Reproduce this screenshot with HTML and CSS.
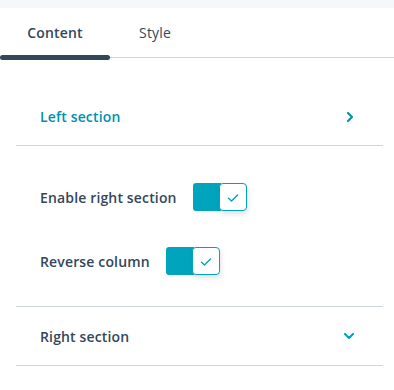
FILE: index.html
```html
<!DOCTYPE html>
<html lang="en">
<head>
  <meta charset="UTF-8">
  <title>Module settings</title>
  <link rel="stylesheet" href="styles.css">
</head>
<body>
  <div class="topbar"></div>

  <!-- tabs -->
  <div class="tabs">
    <div class="tab active">Content</div>
    <div class="tab">Style</div>
  </div>

  <div class="panel">
    <div class="section-head open">
      <span class="section-title">Left section</span>
      <svg class="chevron" width="12" height="12" viewBox="0 0 12 12">
        <path d="M4 2 L8 6 L4 10" fill="none" stroke="#0091ae" stroke-width="2.2" stroke-linecap="round" stroke-linejoin="round"/>
      </svg>
    </div>

    <div class="fields">
      <div class="field">
        <span class="field-label">Enable right section</span>
        <div class="toggle">
          <div class="toggle-track"></div>
          <div class="toggle-knob">
            <svg width="12" height="10" viewBox="0 0 12 10">
              <path d="M1.5 5.2 L4.5 8 L10.5 2" fill="none" stroke="#00a4bd" stroke-width="1.4" stroke-linecap="round" stroke-linejoin="round"/>
            </svg>
          </div>
        </div>
      </div>
      <div class="field">
        <span class="field-label">Reverse column</span>
        <div class="toggle">
          <div class="toggle-track"></div>
          <div class="toggle-knob">
            <svg width="12" height="10" viewBox="0 0 12 10">
              <path d="M1.5 5.2 L4.5 8 L10.5 2" fill="none" stroke="#00a4bd" stroke-width="1.4" stroke-linecap="round" stroke-linejoin="round"/>
            </svg>
          </div>
        </div>
      </div>
    </div>

    <div class="section-head">
      <span class="section-title">Right section</span>
      <svg class="chevron" width="14" height="12" viewBox="0 0 14 12">
        <path d="M3 4 L7 8 L11 4" fill="none" stroke="#00a4bd" stroke-width="2.2" stroke-linecap="round" stroke-linejoin="round"/>
      </svg>
    </div>
  </div>
</body>
</html>
```

FILE: styles.css
```css
* {
  box-sizing: border-box;
}

body {
  margin: 0;
  padding: 0;
  font-family: "Open Sans", Arial, sans-serif;
  font-size: 14px;
  letter-spacing: 0.15px;
  color: #33475b;
  background: #fff;
}

.topbar {
  height: 8px;
  background: #f5f8fa;
}

.tabs {
  display: flex;
  height: 50px;
  border-bottom: 1px solid #cbd6e2;
  margin-bottom: 2px;
}

.tab {
  display: flex;
  align-items: center;
  justify-content: center;
  width: 110px;
  font-weight: 400;
  color: #33475b;
  position: relative;
}

.tab.active {
  font-weight: 600;
}

.tab.active::after {
  content: "";
  position: absolute;
  left: 0;
  right: 0;
  bottom: -3px;
  height: 5px;
  border-radius: 3px;
  background: #33475b;
}

.tab + .tab {
  width: 90px;
}

.panel {
  padding: 28px 11px 0 16px;
}

.section-head {
  display: flex;
  align-items: center;
  justify-content: space-between;
  height: 58px;
  padding: 0 27px 0 24px;
  border-bottom: 1px solid #cbd6e2;
}

.section-head + .fields + .section-head {
  height: 59px;
}

.section-head.open .section-title {
  color: #0091ae;
}

.section-title {
  font-weight: 600;
  color: #33475b;
}

.fields {
  display: flex;
  flex-direction: column;
  gap: 36px;
  padding: 37px 24px 31px;
  border-bottom: 1px solid #cbd6e2;
}

.field {
  display: flex;
  align-items: center;
  gap: 16px;
}

.field-label {
  font-weight: 600;
}

.toggle {
  display: flex;
  width: 54px;
  height: 28px;
}

.toggle-track {
  flex: 1;
  background: #00a4bd;
  border-radius: 3px 0 0 3px;
  margin-right: -2px;
}

.toggle-knob {
  width: 28px;
  height: 28px;
  background: #fff;
  border: 1px solid #00a4bd;
  border-radius: 4px;
  display: flex;
  align-items: center;
  justify-content: center;
  box-shadow: 1px 3px 5px rgba(45, 62, 80, 0.15);
  padding-top: 2px;
}
```
